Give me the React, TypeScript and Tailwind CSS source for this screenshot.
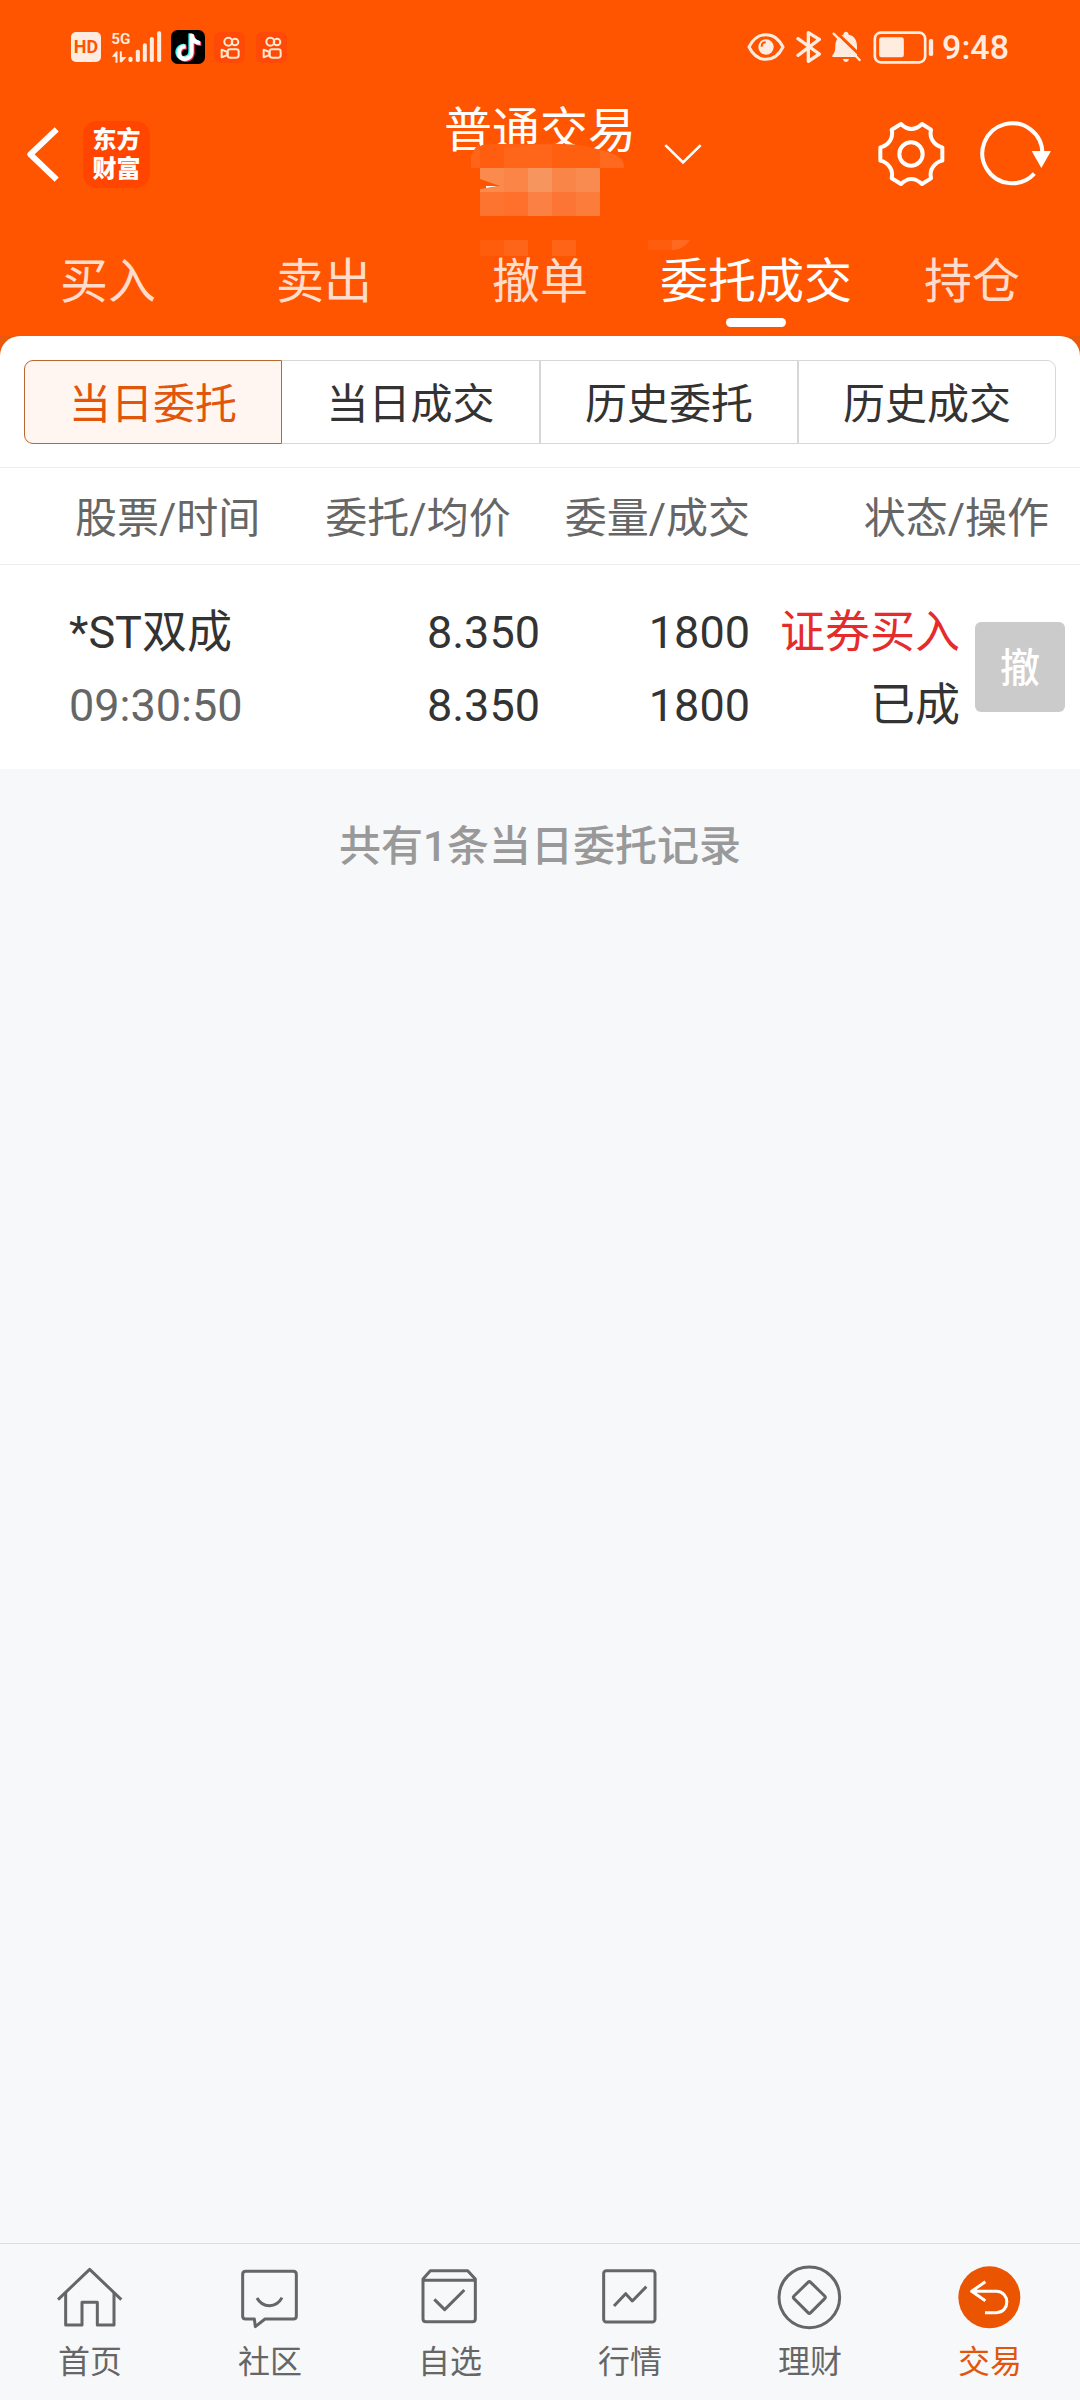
import React from "react";

function SignalIcon() {
  return (
    <svg viewBox="214 88 152 102" className="h-[34px] w-[51px] font-[Roboto,sans-serif]" fill="#ffece0" aria-label="5G 信号">
      <text x="214" y="131" fontSize="46" fontWeight="600">5G</text>
      <path d="M216 168l13-16h4v34h-6v-18zM240 152h6v17h14l-14 16h-6z" />
      <rect x="266" y="168" width="12" height="16" rx="5" />
      <rect x="288" y="147" width="12" height="37" rx="5" />
      <rect x="309" y="128" width="12" height="56" rx="5" />
      <rect x="330" y="109" width="12" height="75" rx="5" />
      <rect x="352" y="92" width="12" height="92" rx="5" />
    </svg>
  );
}

function TiktokIcon() {
  const note = "M454 104h12c1 12 9 20 20 21v12c-8 0-15-2-20-6v27c0 16-12 27-26 27s-25-11-25-25 12-26 27-25v13c-8-1-14 4-14 12s5 12 12 12c8 0 14-5 14-14z";
  return (
    <svg viewBox="393 90 102 102" className="size-[34px]" aria-label="抖音">
      <rect x="393" y="90" width="102" height="102" rx="20" fill="#000" />
      <g transform="translate(-5 -2)">
        <path d={note} fill="#25f4ee" transform="translate(-4 -2)" />
        <path d={note} fill="#fe2c55" transform="translate(3 3)" />
        <path d={note} fill="#fff" />
      </g>
    </svg>
  );
}

function KuaishouIcon() {
  return (
    <svg viewBox="523 94 93 93" className="size-[31px]" fill="none" stroke="#ffe9d0" strokeWidth="6" strokeLinejoin="round" aria-label="快手">
      <rect x="523" y="94" width="93" height="93" rx="18" fill="#ff4906" stroke="none" />
      <circle cx="566" cy="123" r="12" />
      <circle cx="586" cy="124" r="10" />
      <rect x="564" y="146" width="33" height="25" rx="7" />
      <path d="M563 154l-17-7v23l17-7z" />
    </svg>
  );
}

function StatusBar() {
  return (
    <div className="flex h-[94px] items-center justify-between pl-[71px] pr-[71px]">
      <div className="flex items-center">
        <span className="flex size-[30px] items-center justify-center rounded-[5px] bg-[#ffece0] text-[18px] leading-[30px] font-bold text-[#ff5500]">HD</span>
        <span className="ml-[10px] flex"><SignalIcon /></span>
        <span className="ml-[9px] flex"><TiktokIcon /></span>
        <span className="ml-[9px] flex"><KuaishouIcon /></span>
        <span className="ml-[11px] flex"><KuaishouIcon /></span>
      </div>
      <div className="flex items-center">
        <svg viewBox="82 93 114 90" className="h-[30px] w-[38px]" fill="none" stroke="#ffece0" strokeWidth="9" aria-label="护眼">
          <path d="M88 138c12-24 29-37 51-37s39 13 51 37c-12 24-29 37-51 37s-39-13-51-37z" strokeLinejoin="round" />
          <circle cx="139" cy="138" r="23" fill="#ffece0" stroke="none" />
          <path d="M126 137c0-8 5-13 12-13" stroke="#ff5500" strokeWidth="6" />
        </svg>
        <svg viewBox="228 90 78 96" className="ml-[11px] h-[32px] w-[26px]" fill="none" stroke="#ffece0" strokeWidth="10" strokeLinejoin="round" strokeLinecap="round" aria-label="蓝牙">
          <path d="M234 113l64 46-33 22V95l33 20-64 48" />
        </svg>
        <svg viewBox="335 90 90 96" className="ml-[9px] h-[32px] w-[30px]" fill="#ffece0" aria-label="静音">
          <path d="M339 168v-5c7-8 9-14 9-26 0-20 8-33 24-36 1-12 15-12 16 0 17 3 25 16 25 36v31z" />
          <path d="M371 174h18c-2 12-16 12-18 0z" />
          <path d="M345 88l82 79" stroke="#ff5500" strokeWidth="9" />
          <path d="M343 98l78 79" stroke="#ffece0" strokeWidth="7" strokeLinecap="round" />
        </svg>
        <svg viewBox="461 90 182 99" className="ml-[12px] h-[33px] w-[61px]" fill="none" stroke="#ffece0" strokeWidth="8" aria-label="电量">
          <rect x="466" y="95" width="151" height="89" rx="18" />
          <rect x="479" y="109" width="74" height="60" rx="7" fill="#ffece0" stroke="none" />
          <rect x="628" y="114" width="13" height="51" rx="5" fill="#ffece0" stroke="none" />
        </svg>
        <span className="ml-[8px] text-[34px] leading-[40px] font-medium text-[#ffece0]">9:48</span>
      </div>
    </div>
  );
}

/* Pixelated patch that hides the account number under the title. */
function AccountMask() {
  return (
    <svg viewBox="440 140 260 120" className="pointer-events-none absolute top-[46px] left-[-4px] h-[120px] w-[260px]" aria-hidden="true">
      <path d="M471 168v-12c4-8 12-12 24-12h32c20 0 44-2 66 4 22 5 31 9 31 16v4z" fill="#ff5f12" />
      <path d="M471 168v-12c4-8 5-10 9-12v24z" fill="#ff6418" />
      <path d="M480 168v-22c8-3 16-1 24-1v23z" fill="#ff5e10" />
      <path d="M504 168v-20c16-1 32-5 48-3v23z" fill="#ff6619" />
      <path d="M552 168v-23c16 0 32 1 48 6v17z" fill="#ff600f" />
      <path d="M600 168v-18c14 3 24 9 24 18z" fill="#ff6a1f" />
      <rect x="480" y="168" width="24" height="24" fill="#fb8a4d" />
      <rect x="504" y="168" width="24" height="24" fill="#fb8447" />
      <rect x="528" y="168" width="24" height="24" fill="#f7955f" />
      <rect x="552" y="168" width="24" height="24" fill="#f98549" />
      <rect x="576" y="168" width="24" height="24" fill="#f98b50" />
      <rect x="480" y="192" width="24" height="24" fill="#fd7431" />
      <rect x="504" y="192" width="24" height="24" fill="#fe702b" />
      <rect x="528" y="192" width="24" height="24" fill="#fa8043" />
      <rect x="552" y="192" width="24" height="24" fill="#fc7534" />
      <rect x="576" y="192" width="24" height="24" fill="#fb7c3b" />
      <path d="M480 179l20 7-20 3z" fill="#ff5500" />
      <path d="M486 186h12l-12 2z" fill="#fff" />
      <rect x="480" y="240" width="24" height="16" fill="#ff5c0c" />
      <rect x="504" y="240" width="24" height="16" fill="#ff6519" />
      <rect x="552" y="240" width="24" height="16" fill="#ff6417" />
      <path d="M648 240h24v10h-24z" fill="#ff5d0e" />
      <path d="M672 240h18c-4 6-10 10-18 10z" fill="#ff6a20" />
    </svg>
  );
}

function TitleBar() {
  return (
    <div className="grid h-[120px] grid-cols-[1fr_auto_1fr] items-center">
      <div className="flex items-center gap-[24px] pl-[27px]">
        <button type="button" aria-label="返回" className="flex">
          <svg viewBox="81 111 96 165" className="h-[55px] w-[32px]" fill="none" stroke="#fff" strokeWidth="18" strokeLinejoin="round">
            <path d="M170 118L91 193l79 76" />
          </svg>
        </button>
        <div className="flex size-[67px] flex-col items-center justify-center rounded-[14px] bg-[#ff4500] pt-[2px] text-[24px] leading-[29px] font-black text-white">
          <span>东方</span>
          <span>财富</span>
        </div>
      </div>
      <div className="relative self-start pt-[8px]">
        <h1 className="text-[48px] leading-[58px] text-white">普通交易</h1>
        <AccountMask />
      </div>
      <div className="flex items-center justify-between pr-[27px] pl-[28px]">
        <button type="button" aria-label="切换账户" className="flex">
          <svg viewBox="795 155 114 65" className="h-[22px] w-[38px]" fill="none" stroke="#fff" strokeWidth="8">
            <path d="M799 161l53 52 53-52" />
          </svg>
        </button>
        <div className="flex items-center gap-[32px]">
          <button type="button" aria-label="设置" className="flex">
            <svg viewBox="406 87 210 210" className="size-[70px]" fill="none" stroke="#fff" strokeWidth="12" strokeLinejoin="round">
              <path d="M481 102Q512 132 544 102L571 119C565 144 580 166 605 172L605 212C580 218 565 240 571 265L544 282Q512 252 481 282L453 265C459 240 444 218 419 212L419 172C444 166 459 144 453 119Z" />
              <circle cx="511" cy="192" r="35" />
            </svg>
          </button>
          <button type="button" aria-label="刷新" className="flex">
            <svg viewBox="711 87 225 210" className="h-[70px] w-[75px]" fill="none" stroke="#fff" strokeWidth="12">
              <path d="M904 190A90 90 0 1 0 880 251" />
              <path d="M872 183h58l-29 51z" fill="#fff" stroke="none" />
            </svg>
          </button>
        </div>
      </div>
    </div>
  );
}

const TABS = ["买入", "卖出", "撤单", "委托成交", "持仓"];

function TradeTabs() {
  return (
    <nav className="grid h-[122px] grid-cols-5">
      {TABS.map((tab) => {
        const active = tab === "委托成交";
        return (
          <button
            key={tab}
            type="button"
            className={`flex flex-col items-center justify-end gap-[8px] pb-[9px] text-[48px] leading-[56px] whitespace-nowrap ${active ? "text-white" : "text-[#ffdccb]"}`}
          >
            <span>{tab}</span>
            <span className={`h-[9px] w-[60px] rounded-full ${active ? "bg-white" : "bg-transparent"}`} />
          </button>
        );
      })}
    </nav>
  );
}

const SEGMENTS = ["当日委托", "当日成交", "历史委托", "历史成交"];

function Segments() {
  return (
    <div className="grid grid-cols-4 px-[24px] pt-[24px] pb-[23px]">
      {SEGMENTS.map((label, i) => (
        <button
          key={label}
          type="button"
          className={`h-[84px] border pt-[5px] text-[42px] leading-[48px] whitespace-nowrap first:rounded-l-[9px] last:rounded-r-[9px] ${
            i === 0 ? "border-[#b8692f] bg-[#fff5f1] text-[#e2560b]" : "border-l-0 border-[#d4d8d9] text-[#333] nth-3:border-l nth-4:border-l"
          }`}
        >
          {label}
        </button>
      ))}
    </div>
  );
}

function OrdersTable() {
  return (
    <table className="w-full table-fixed border-collapse">
      <colgroup>
        <col />
        <col className="w-[244px]" />
        <col className="w-[210px]" />
        <col className="w-[210px]" />
        <col className="w-[120px]" />
      </colgroup>
      <thead>
        <tr className="h-[97px] border-y border-[#eeeeee] text-[42px] leading-[48px] whitespace-nowrap text-[#666]">
          <th className="pt-[6px] pl-[75px] text-left font-normal">股票/时间</th>
          <th className="pt-[6px] text-center font-normal">委托/均价</th>
          <th className="pt-[6px] text-right font-normal">委量/成交</th>
          <th colSpan={2} className="pt-[6px] pr-[31px] text-right font-normal">状态/操作</th>
        </tr>
      </thead>
      <tbody>
        <tr className="text-[45px] leading-[73px] whitespace-nowrap text-[#333]">
          <td className="pt-[31px] pb-[27px] pl-[69px]">
            <div>*ST双成</div>
            <div className="text-[#666]">09:30:50</div>
          </td>
          <td className="pt-[31px] pb-[27px] text-right">
            <div>8.350</div>
            <div>8.350</div>
          </td>
          <td className="pt-[31px] pb-[27px] text-right">
            <div>1800</div>
            <div>1800</div>
          </td>
          <td className="pt-[31px] pb-[27px] text-right">
            <div className="text-[#e52b2b]">证券买入</div>
            <div>已成</div>
          </td>
          <td className="pl-[15px] align-middle">
            <button type="button" className="flex size-[90px] items-center justify-center rounded-[6px] bg-[#cbcbcb] pt-[4px] text-[40px] leading-[48px] font-medium text-white">撤</button>
          </td>
        </tr>
      </tbody>
    </table>
  );
}

const NAV = [
  {
    label: "首页",
    box: "171 132 198 198",
    art: (
      <>
        <path d="M174 239l95-91 95 91" />
        <path d="M197 218v97h49v-68h46v68h50v-97" />
      </>
    ),
  },
  {
    label: "社区",
    box: "711 132 198 198",
    art: (
      <>
        <path d="M737 154h143q9 0 9 9v126q0 8-9 8h-85l-29 23-3-23h-26q-9 0-9-8V163q0-9 9-9z" />
        <path d="M771 234c17 31 58 31 75-1" />
      </>
    ),
  },
  {
    label: "自选",
    box: "171 132 198 198",
    art: (
      <>
        <path d="M211 152h112l23 25v119q0 9-9 9H198q-9 0-9-9V177z" />
        <path d="M189 181h157M223 238l31 31 59-59" />
      </>
    ),
  },
  {
    label: "行情",
    box: "711 132 198 198",
    art: (
      <>
        <rect x="731" y="152" width="154" height="154" rx="8" />
        <path d="M762 258l35-37 20 22 42-43" />
      </>
    ),
  },
  {
    label: "理财",
    box: "171 132 198 198",
    art: (
      <>
        <circle cx="268" cy="232" r="91" />
        <path d="M264 187q4-4 8 0l42 41q4 4 0 8l-42 42q-4 4-8 0l-42-42q-4-4 0-8z" />
      </>
    ),
  },
  {
    label: "交易",
    box: "711 132 198 198",
    art: (
      <>
        <circle cx="808" cy="232" r="93" fill="#eb5502" stroke="none" />
        <path d="M796 185l-41 29 41 28M757 214h72c42 0 42 64 0 64h-34" stroke="#fff" />
      </>
    ),
  },
];

function BottomNav() {
  return (
    <nav className="grid grid-cols-6 border-t border-[#dcdddf] pt-[20px] pb-[18px]">
      {NAV.map((item) => (
        <a
          key={item.label}
          href="#"
          className={`flex flex-col items-center gap-[12px] text-[32px] leading-[40px] ${item.label === "交易" ? "text-[#e2560b]" : "text-[#666]"}`}
        >
          <svg viewBox={item.box} className="size-[66px]" fill="none" stroke="#666" strokeWidth="9" strokeLinejoin="round" aria-hidden="true">
            {item.art}
          </svg>
          <span>{item.label}</span>
        </a>
      ))}
    </nav>
  );
}

export default function App() {
  return (
    <div className="flex min-h-screen flex-col bg-[#f7f8fa] font-[Roboto,'Noto_Sans_CJK_SC',sans-serif]">
      <header className="bg-[#ff5500]">
        <StatusBar />
        <TitleBar />
        <TradeTabs />
      </header>
      <main className="flex-1">
        <div className="bg-[#e8590c]">
          <section className="rounded-t-[20px] bg-white">
            <Segments />
            <OrdersTable />
          </section>
        </div>
        <p className="pt-[52px] text-center text-[42px] leading-[52px] font-medium text-[#999]">共有1条当日委托记录</p>
      </main>
      <BottomNav />
    </div>
  );
}
